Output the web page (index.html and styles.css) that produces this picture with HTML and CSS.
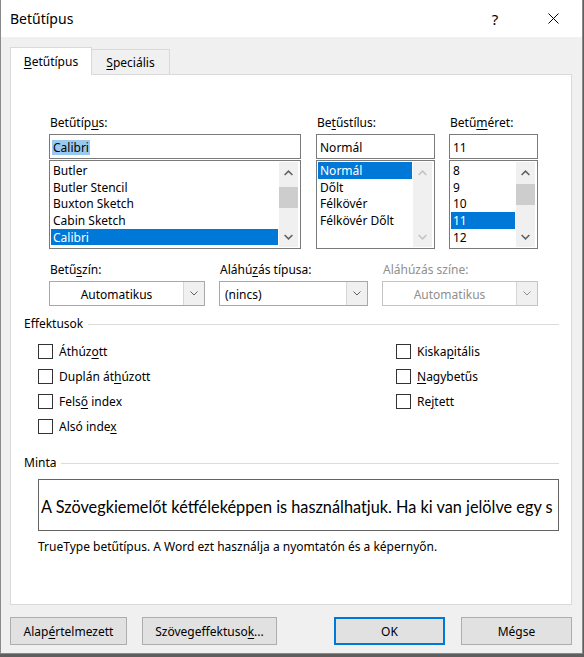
FILE: index.html
```html
<!DOCTYPE html>
<html lang="hu">
<head>
    <meta charset="UTF-8">
    <title>Betűtípus</title>
    <link rel="stylesheet" href="styles.css">
</head>
<body>

    <div class="dialog">
        <div class="titlebar">
            <span class="title">Betűtípus</span>
            <span class="caption-btn help">?</span>
            <span class="caption-btn close">
                <svg width="11" height="11" viewBox="0 0 11 11"><path d="M0.5 0.5 L10.5 10.5 M10.5 0.5 L0.5 10.5" stroke="#000" stroke-width="1" fill="none"/></svg>
            </span>
        </div>

        <div class="content">
            <div class="tabs">
                <div class="tab active"><span><u>B</u>etűtípus</span></div>
                <div class="tab"><span><u>S</u>peciális</span></div>
            </div>

            <div class="panel">
                <!-- font / style / size pickers -->
                <div class="font-row">
                    <div class="field field-font">
                        <span class="label">Betűtíp<u>u</u>s:</span>
                        <div class="edit"><span class="selected-text">Calibri</span></div>
                        <div class="listbox">
                            <ul class="items">
                                <li>Butler</li>
                                <li>Butler Stencil</li>
                                <li>Buxton Sketch</li>
                                <li>Cabin Sketch</li>
                                <li class="sel">Calibri</li>
                            </ul>
                            <div class="scrollbar">
                                <div class="sb-btn"><svg width="9" height="6" viewBox="0 0 9 6"><path d="M0.6 5 L4.5 1.1 L8.4 5" /></svg></div>
                                <div class="sb-track"><div class="sb-thumb thumb-font"></div></div>
                                <div class="sb-btn"><svg width="9" height="6" viewBox="0 0 9 6"><path d="M0.6 1 L4.5 4.9 L8.4 1" /></svg></div>
                            </div>
                        </div>
                    </div>

                    <div class="field field-style">
                        <span class="label">Be<u>t</u>űstílus:</span>
                        <div class="edit"><span>Normál</span></div>
                        <div class="listbox">
                            <ul class="items">
                                <li class="sel">Normál</li>
                                <li>Dőlt</li>
                                <li>Félkövér</li>
                                <li>Félkövér Dőlt</li>
                            </ul>
                            <div class="scrollbar disabled">
                                <div class="sb-btn"><svg width="9" height="6" viewBox="0 0 9 6"><path d="M0.6 5 L4.5 1.1 L8.4 5" /></svg></div>
                                <div class="sb-track"></div>
                                <div class="sb-btn"><svg width="9" height="6" viewBox="0 0 9 6"><path d="M0.6 1 L4.5 4.9 L8.4 1" /></svg></div>
                            </div>
                        </div>
                    </div>

                    <div class="field field-size">
                        <span class="label">Betű<u>m</u>éret:</span>
                        <div class="edit"><span>11</span></div>
                        <div class="listbox">
                            <ul class="items">
                                <li>8</li>
                                <li>9</li>
                                <li>10</li>
                                <li class="sel">11</li>
                                <li>12</li>
                            </ul>
                            <div class="scrollbar">
                                <div class="sb-btn"><svg width="9" height="6" viewBox="0 0 9 6"><path d="M0.6 5 L4.5 1.1 L8.4 5" /></svg></div>
                                <div class="sb-track"><div class="sb-thumb thumb-size"></div></div>
                                <div class="sb-btn"><svg width="9" height="6" viewBox="0 0 9 6"><path d="M0.6 1 L4.5 4.9 L8.4 1" /></svg></div>
                            </div>
                        </div>
                    </div>
                </div>

                <!-- colour and underline drop-downs -->
                <div class="combo-row">
                    <div class="field field-color">
                        <span class="label">Betű<u>s</u>zín:</span>
                        <div class="combo">
                            <span class="combo-text centered">Automatikus</span>
                            <span class="combo-btn"><svg width="8" height="5" viewBox="0 0 8 5"><path d="M0.5 0.5 L4 4 L7.5 0.5" /></svg></span>
                        </div>
                    </div>
                    <div class="field field-underline">
                        <span class="label">Aláhú<u>z</u>ás típusa:</span>
                        <div class="combo">
                            <span class="combo-text">(nincs)</span>
                            <span class="combo-btn"><svg width="8" height="5" viewBox="0 0 8 5"><path d="M0.5 0.5 L4 4 L7.5 0.5" /></svg></span>
                        </div>
                    </div>
                    <div class="field field-color disabled">
                        <span class="label">Aláhúzás színe:</span>
                        <div class="combo">
                            <span class="combo-text centered">Automatikus</span>
                            <span class="combo-btn"><svg width="8" height="5" viewBox="0 0 8 5"><path d="M0.5 0.5 L4 4 L7.5 0.5" /></svg></span>
                        </div>
                    </div>
                </div>

                <div class="section-title"><span>Effektusok</span><span class="rule"></span></div>

                <div class="effects">
                    <div class="effects-col left">
                        <label class="check"><span class="box"></span><span>Áthúz<u>o</u>tt</span></label>
                        <label class="check"><span class="box"></span><span>Duplán át<u>h</u>úzott</span></label>
                        <label class="check"><span class="box"></span><span>Fels<u>ő</u> index</span></label>
                        <label class="check"><span class="box"></span><span>Alsó inde<u>x</u></span></label>
                    </div>
                    <div class="effects-col">
                        <label class="check"><span class="box"></span><span>Kiska<u>p</u>itális</span></label>
                        <label class="check"><span class="box"></span><span><u>N</u>agybetűs</span></label>
                        <label class="check"><span class="box"></span><span>Re<u>j</u>tett</span></label>
                    </div>
                </div>

                <div class="section-title sample-title"><span>Minta</span><span class="rule"></span></div>

                <div class="preview"><span>A Szövegkiemelőt kétféleképpen is használhatjuk. Ha ki van jelölve egy s</span></div>
                <p class="info">TrueType betűtípus. A Word ezt használja a nyomtatón és a képernyőn.</p>
            </div>

            <div class="buttons">
                <div class="btn btn-default"><span>Alap<u>é</u>rtelmezett</span></div>
                <div class="btn btn-effects"><span>Szövegeffektuso<u>k</u>...</span></div>
                <div class="btn btn-ok">OK</div>
                <div class="btn btn-cancel">Mégse</div>
            </div>
        </div>
    </div>

</body>
</html>
```

FILE: styles.css
```css
/* General Styling */
* {
    margin: 0;
    padding: 0;
    box-sizing: border-box;
}

body {
    background: #5e5e5e;
    font-family: "Noto Sans", "Segoe UI", sans-serif;
    font-size: 12px;
    color: #000;
}

u {
    text-underline-offset: 2px;
}

/* Window frame */
.dialog {
    width: 583px;
    height: 654px;
    background: #f0f0f0;
    border: 1px solid #8a8a8a;
    border-top: none;
    display: flex;
    flex-direction: column;
}

.titlebar {
    height: 37px;
    background: #fff;
    display: flex;
    align-items: center;
    padding-left: 9px;
}

.titlebar .title {
    flex: 1;
    font-size: 14px;
}

.caption-btn {
    width: 58px;
    height: 37px;
    display: flex;
    align-items: center;
    justify-content: center;
}

.caption-btn.help {
    font-size: 15px;
}

.content {
    flex: 1;
    display: flex;
    flex-direction: column;
    padding: 10px 10px 0 9px;
}

/* Tabs */
.tabs {
    display: flex;
    align-items: flex-start;
    height: 28px;
}

.tab {
    height: 25px;
    margin-top: 2px;
    width: 78px;
    border: 1px solid #d9d9d9;
    border-left: none;
    border-bottom: none;
    display: flex;
    align-items: center;
    justify-content: center;
}

.tab.active {
    width: 82px;
    height: 28px;
    margin-top: 0;
    border-left: 1px solid #d9d9d9;
    background: #fff;
    position: relative;
    z-index: 1;
}

.panel {
    margin-top: -1px;
    height: 531px;
    background: #fff;
    border: 1px solid #d9d9d9;
    padding: 40px 12px 0 13px;
}

/* Fields */
.field {
    display: flex;
    flex-direction: column;
}

.label {
    display: block;
    line-height: 16px;
    padding-left: 1px;
    margin-bottom: 3px;
    white-space: nowrap;
}

.font-row {
    display: flex;
    margin-left: 25px;
}

.field-font { width: 252px; }
.field-style { width: 119px; margin-left: 15px; }
.field-size { width: 89px; margin-left: 14px; }

.edit {
    height: 25px;
    border: 1px solid #7a7a7a;
    background: #fff;
    display: flex;
    align-items: center;
    padding: 1px 0 0 3px;
}

.selected-text {
    background: #99c9ef;
    line-height: 15px;
    padding: 0 1px;
    margin-left: -1px;
}

.listbox {
    margin-top: 1px;
    height: 89px;
    border: 1px solid #7a7a7a;
    padding: 1px;
    display: flex;
    background: #fff;
}

.items {
    flex: 1;
    list-style: none;
    margin-right: 1px;
    overflow: hidden;
}

.items li {
    height: 16.67px;
    padding: 2px 0 0 2px;
    line-height: 14.67px;
    white-space: nowrap;
}

.items li.sel {
    background: #0078d7;
    color: #fff;
}

/* Scrollbars */
.scrollbar {
    width: 19px;
    margin-right: 1px;
    background: #f0f0f0;
    display: flex;
    flex-direction: column;
}

.sb-btn {
    height: 21px;
    display: flex;
    align-items: center;
    justify-content: center;
}

.sb-btn svg path {
    fill: none;
    stroke: #606060;
    stroke-width: 1.5;
}

.scrollbar.disabled .sb-btn svg path {
    stroke: #c3c3c3;
}

.sb-track {
    flex: 1;
}

.sb-thumb {
    height: 21px;
    background: #cdcdcd;
}

.thumb-font { margin-top: 4px; }
.thumb-size { margin-top: 1px; }

/* Drop-downs */
.combo-row {
    display: flex;
    margin-left: 25px;
    margin-top: 13px;
}

.field-color { width: 156px; }
.field-underline { width: 149px; margin: 0 14px; }

.combo {
    height: 25px;
    border: 1px solid #a8a8a8;
    background: #fff;
    display: flex;
}

.combo-text {
    flex: 1;
    display: flex;
    align-items: center;
    padding: 1px 0 0 5px;
}

.combo-text.centered {
    justify-content: center;
    padding-left: 0;
}

.combo-btn {
    width: 21px;
    border-left: 1px solid #d6d6d6;
    background: #f0f0f0;
    display: flex;
    align-items: center;
    justify-content: center;
}

.combo-btn svg path {
    fill: none;
    stroke: #606060;
    stroke-width: 1;
}

.field.disabled .label,
.field.disabled .combo-text {
    color: #8f8f8f;
}

.field.disabled .combo {
    border-color: #c4c4c4;
}

.field.disabled .combo-btn svg path {
    stroke: #8f8f8f;
}

/* Section headings with rule */
.section-title {
    display: flex;
    align-items: center;
    gap: 5px;
    line-height: 16px;
    margin-top: 10px;
}

.section-title .rule {
    flex: 1;
    height: 1px;
    background: #dcdcdc;
}

.sample-title {
    margin-top: 16px;
}

/* Effects checkboxes */
.effects {
    display: flex;
    margin: 7px 0 0 14px;
}

.effects-col {
    display: flex;
    flex-direction: column;
}

.effects-col.left {
    width: 358px;
}

.check {
    height: 25px;
    display: flex;
    align-items: center;
    gap: 6px;
}

.check .box {
    width: 15px;
    height: 15px;
    border: 1px solid #333;
    background: #fff;
}

/* Sample */
.preview {
    margin: 8px 0 0 14px;
    height: 52px;
    border: 1px solid #646464;
    display: flex;
    align-items: center;
    padding: 2px 0 0 2px;
    overflow: hidden;
    white-space: nowrap;
    font-family: "Lato", "Noto Sans", sans-serif;
    font-size: 16.3px;
}

.info {
    margin: 8px 0 0 14px;
    line-height: 16px;
}

/* Bottom buttons */
.buttons {
    display: flex;
    margin-top: 12px;
}

.btn {
    height: 28px;
    background: #e1e1e1;
    border: 1px solid #adadad;
    display: flex;
    align-items: center;
    justify-content: center;
}

.btn-default { width: 117px; }
.btn-effects { width: 135px; margin-left: 15px; }
.btn-ok { width: 111px; margin-left: auto; border: 2px solid #0078d7; }
.btn-cancel { width: 111px; margin-left: 16px; }
```
